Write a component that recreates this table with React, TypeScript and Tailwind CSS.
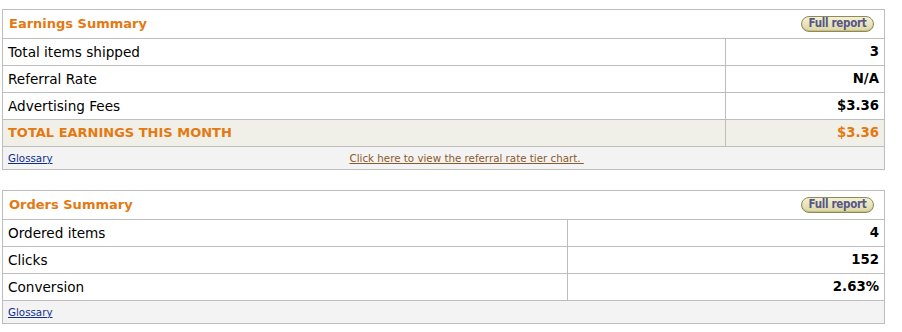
import React from "react";

type Row = { label: string; value: string };

function FullReport() {
  return (
    <a
      href="#"
      className="inline-flex h-[16px] w-[73px] items-center justify-center rounded-full border border-[#8f8a5c] bg-[linear-gradient(#f4f1d2,#dcd6a4)] pb-[1px] font-['Liberation_Sans_Narrow','DejaVu_Sans_Condensed',sans-serif] text-[11.5px] font-bold leading-none tracking-[-0.3px] text-[#565687] no-underline shadow-[inset_0_-1px_0_#c4bd84]"
    >
      Full report
    </a>
  );
}

function Summary({
  title,
  rows,
  split,
  total,
  footerLink,
}: {
  title: string;
  rows: Row[];
  split: string;
  total?: Row;
  footerLink?: string;
}) {
  return (
    <div className="w-[883px] border border-[#bdbdbd] bg-white">
      <div className="flex h-[29px] items-center justify-between border-b border-[#bdbdbd] pl-[6px] pr-[10px]">
        <span className="text-[13px] font-bold text-[#e47911]">{title}</span>
        <FullReport />
      </div>
      {rows.map((r) => (
        <div
          key={r.label}
          className={`grid h-[27px] border-b border-[#bdbdbd] ${split}`}
        >
          <div className="flex items-center border-r border-[#bdbdbd] pl-[5px] text-[13.6px] text-black">
            {r.label}
          </div>
          <div className="flex items-center justify-end pr-[5px] text-[13.3px] font-bold text-black">
            {r.value}
          </div>
        </div>
      ))}
      {total && (
        <div className={`grid h-[27px] border-b border-[#bdbdbd] bg-[#f0f0e8] ${split}`}>
          <div className="flex items-center border-r border-[#bdbdbd] pl-[5px] text-[13px] font-bold text-[#e47911]">
            {total.label}
          </div>
          <div className="flex items-center justify-end pr-[5px] text-[13.3px] font-bold text-[#e47911]">
            {total.value}
          </div>
        </div>
      )}
      <div className="flex h-[22px] items-center bg-[#f3f3f3] pl-[5px] pt-[1px] text-[10.3px]">
        <a href="#" className="text-[#0f2f8f] underline">
          Glossary
        </a>
        {footerLink && (
          <a
            href="#"
            className="ml-[297px] whitespace-pre text-[#8b5a2b] underline"
          >
            {footerLink}
          </a>
        )}
      </div>
    </div>
  );
}

export default function App() {
  return (
    <div className="min-h-[332px] w-[902px] bg-white pl-[2px] pt-[9px] font-['DejaVu_Sans',Verdana,sans-serif]">
      <Summary
        title="Earnings Summary"
        split="grid-cols-[723px_1fr]"
        rows={[
          { label: "Total items shipped", value: "3" },
          { label: "Referral Rate", value: "N/A" },
          { label: "Advertising Fees", value: "$3.36" },
        ]}
        total={{ label: "TOTAL EARNINGS THIS MONTH", value: "$3.36" }}
        footerLink="Click here to view the referral rate tier chart. "
      />
      <div className="h-[20px]" />
      <Summary
        title="Orders Summary"
        split="grid-cols-[565px_1fr]"
        rows={[
          { label: "Ordered items", value: "4" },
          { label: "Clicks", value: "152" },
          { label: "Conversion", value: "2.63%" },
        ]}
      />
    </div>
  );
}
